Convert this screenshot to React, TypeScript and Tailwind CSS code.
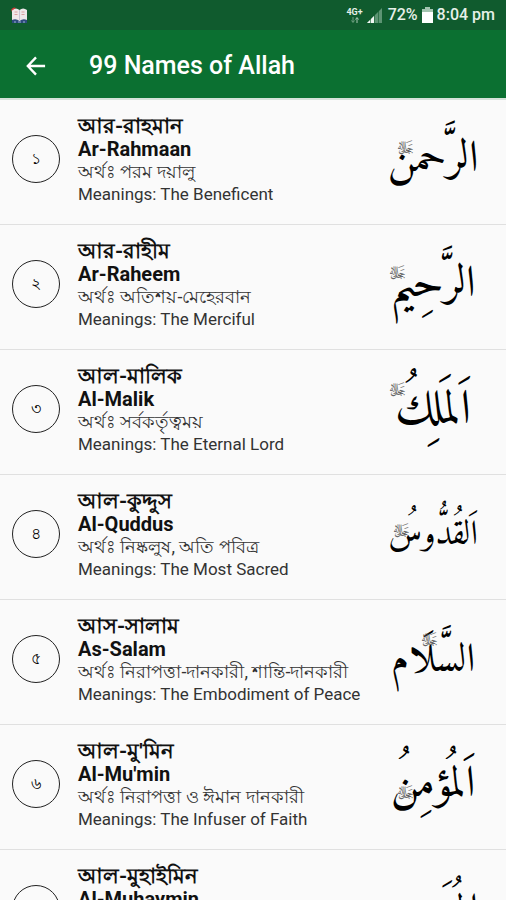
type Name = {
  no: string;
  bn: string;
  en: string;
  bnMeaning: string;
  meaning: string;
  arabic: string;
  // where the honorific sits over the calligraphy
  mark: string;
  size: string;
};

const names: Name[] = [
  {
    no: "১",
    bn: "আর-রাহমান",
    en: "Ar-Rahmaan",
    bnMeaning: "পরম দয়ালু",
    meaning: "The Beneficent",
    arabic: "الرَّحمن",
    mark: "left-2 top-2",
    size: "text-[44px]",
  },
  {
    no: "২",
    bn: "আর-রাহীম",
    en: "Ar-Raheem",
    bnMeaning: "অতিশয়-মেহেরবান",
    meaning: "The Merciful",
    arabic: "الرَّحِيم",
    mark: "left-0 top-2",
    size: "text-[44px]",
  },
  {
    no: "৩",
    bn: "আল-মালিক",
    en: "Al-Malik",
    bnMeaning: "সর্বকর্তৃত্বময়",
    meaning: "The Eternal Lord",
    arabic: "اَلمَلِكُ",
    mark: "left-0 top-0",
    size: "text-[48px]",
  },
  {
    no: "৪",
    bn: "আল-কুদ্দুস",
    en: "Al-Quddus",
    bnMeaning: "নিষ্কলুষ, অতি পবিত্র",
    meaning: "The Most Sacred",
    arabic: "اَلقُدُّوسُ",
    mark: "left-1 top-4",
    size: "text-[34px]",
  },
  {
    no: "৫",
    bn: "আস-সালাম",
    en: "As-Salam",
    bnMeaning: "নিরাপত্তা-দানকারী, শান্তি-দানকারী",
    meaning: "The Embodiment of Peace",
    arabic: "السَّلَام",
    mark: "left-8 top-0",
    size: "text-[40px]",
  },
  {
    no: "৬",
    bn: "আল-মু'মিন",
    en: "Al-Mu'min",
    bnMeaning: "নিরাপত্তা ও ঈমান দানকারী",
    meaning: "The Infuser of Faith",
    arabic: "اَلمُؤمِنُ",
    mark: "left-2 top-7",
    size: "text-[44px]",
  },
  {
    no: "৭",
    bn: "আল-মুহাইমিন",
    en: "Al-Muhaymin",
    bnMeaning: "পরিপূর্ণ রক্ষণাবেক্ষণকারী",
    meaning: "The Preserver of Safety",
    arabic: "المُهَيمِن",
    mark: "left-2 top-7",
    size: "text-[40px]",
  },
];

function StatusBar() {
  return (
    <div className="flex h-[30px] shrink-0 items-center bg-[#105b2e] px-[11px] text-[#e6f0e9]">
      <svg width="17" height="17" viewBox="0 0 17 17" aria-hidden="true">
        <path d="M1 4h15v12H1z" fill="#2d4b7c" />
        <path d="M1 3Q5 0 8.500 3Q12 0 16 3V13Q12 11 8.500 14Q5 11 1 13Z" fill="#efe8ea" />
        <path d="M0.500 5V2L3 0.500L5 1L1.500 3Z" fill="#e33b3b" />
        <path d="M3.500 5h3M3.500 7.500h3M10.500 5h3M10.500 7.500h3" stroke="#d9a0a0" />
        <path d="M8.500 3v10" stroke="#c9c4d4" />
        <path d="M3 15h2M7 15h3M12 15h2" stroke="#9db2d6" />
      </svg>
      <div className="ml-auto flex items-center">
        <div className="flex flex-col items-center">
          <span className="text-[9px] leading-[9px] font-bold">4G+</span>
          <svg width="8" height="6" viewBox="0 0 8 6" aria-hidden="true">
            <path d="M2 0v5M0.500 3.500L2 5.500L3.500 3.500" stroke="#6f9e81" fill="none" />
            <path d="M6 6V1M4.500 2.500L6 0.500L7.500 2.500" stroke="#a9c8b4" fill="none" />
          </svg>
        </div>
        <svg className="ml-1" width="15" height="15" viewBox="0 0 15 15" aria-hidden="true">
          <path d="M0 15L15 0V15Z" fill="#5d9473" />
          <path d="M0 15L7 8V15Z" fill="#f1f6f3" />
          <path d="M3.500 8v7M7.500 4v11M11.500 1v14" stroke="#105b2e" strokeWidth="0.600" />
        </svg>
        <span className="ml-[6px] text-base leading-8 font-medium">72%</span>
        <svg className="mx-1" width="11" height="16" viewBox="0 0 11 16" aria-hidden="true">
          <path d="M3 0h5v2h3v4H0V2h3z" fill="#a3c4b0" />
          <path d="M0 5h11v11H0z" fill="#fff" />
        </svg>
        <span className="text-base leading-8 font-medium">8:04 pm</span>
      </div>
    </div>
  );
}

function NameRow({ item }: { item: Name }) {
  return (
    <li className="flex items-center border-b border-[#e0e0e0] pt-[14px] pr-[30px] pb-5 pl-3">
      <span className="flex size-12 shrink-0 items-center justify-center rounded-full border border-[#222] text-base">
        {item.no}
      </span>
      <div className="ml-[18px] min-w-0 flex-1 whitespace-nowrap text-[#111]">
        <h2 className="text-[21px] leading-6 font-bold">{item.bn}</h2>
        <p className="text-xl leading-[22px] font-bold">{item.en}</p>
        <p className="text-lg leading-6 text-[#333]">অর্থঃ {item.bnMeaning}</p>
        <p className="text-[17px] leading-5 text-[#333]">Meanings: {item.meaning}</p>
      </div>
      <div className="relative flex h-14 w-[86px] shrink-0 items-center justify-center pt-1 font-['Amiri','DejaVu_Sans',serif]">
        <span lang="ar" dir="rtl" className={`leading-[56px] whitespace-nowrap text-black ${item.size}`}>
          {item.arabic}
        </span>
        <span lang="ar" className={`absolute text-base leading-5 text-[#666] ${item.mark}`}>
          ﷻ
        </span>
      </div>
    </li>
  );
}

export default function App() {
  return (
    <div className="flex h-screen flex-col bg-[#fafafa] font-['Roboto','Noto_Sans',sans-serif]">
      <StatusBar />
      <header className="flex h-[70px] shrink-0 items-center border-b-2 border-[#d5e2d9] bg-[#0b7031] pt-1 pl-6 text-white">
        <button type="button" aria-label="Back" className="flex size-6 items-center justify-center">
          <svg width="20" height="20" viewBox="0 0 22 22" fill="none" stroke="currentColor" strokeWidth="2.600">
            <path d="M11 1.500L2 11L11 20.500M2 11H21" />
          </svg>
        </button>
        <h1 className="ml-[41px] text-[25px] leading-8 font-medium">99 Names of Allah</h1>
      </header>
      <main className="min-h-0 flex-1 overflow-y-auto [scrollbar-width:none]">
        <ul>
          {names.map((item) => (
            <NameRow key={item.no} item={item} />
          ))}
        </ul>
      </main>
    </div>
  );
}
